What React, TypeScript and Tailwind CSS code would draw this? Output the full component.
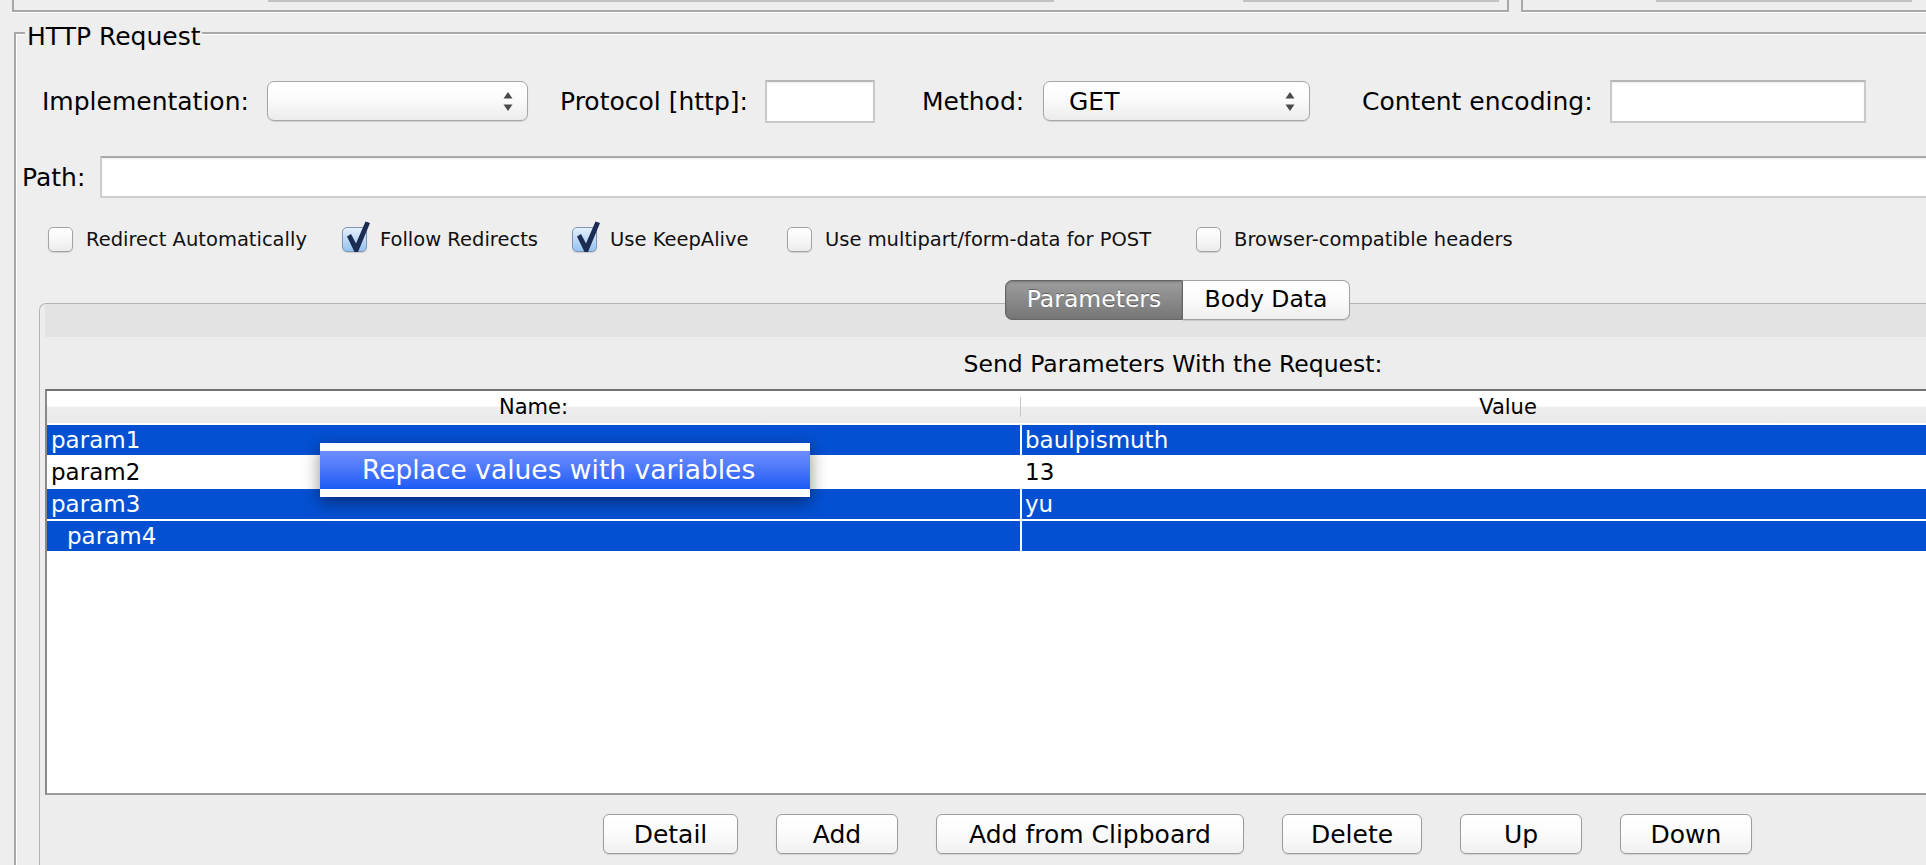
import type { ReactNode } from 'react';

// JMeter "HTTP Request" sampler panel, Mac Aqua look

const ROWS = [
  { name: 'param1', value: 'baulpismuth', selected: true, editing: false },
  { name: 'param2', value: '13', selected: false, editing: false },
  { name: 'param3', value: 'yu', selected: true, editing: false },
  { name: 'param4', value: '', selected: true, editing: true },
];

const BUTTONS = [
  { label: 'Detail', width: 'w-[135px]' },
  { label: 'Add', width: 'w-[122px]' },
  { label: 'Add from Clipboard', width: 'w-[308px]' },
  { label: 'Delete', width: 'w-[140px]' },
  { label: 'Up', width: 'w-[122px]' },
  { label: 'Down', width: 'w-[132px]' },
];

function UpDownArrows() {
  return (
    <svg width="10" height="19" viewBox="0 0 10 19" className="shrink-0">
      <path d="M5 0 L9.5 6.5 L0.5 6.5 Z" fill="#4a4a4a" />
      <path d="M0.5 12.5 L9.5 12.5 L5 19 Z" fill="#4a4a4a" />
    </svg>
  );
}

function Combo({ width, value }: { width: string; value?: string }) {
  return (
    <div
      className={`${width} h-[40px] flex items-center rounded-[7px] border border-[#a6a6a6] bg-[linear-gradient(to_bottom,#ffffff_0%,#fbfbfb_45%,#ececec_100%)] shadow-[0_1px_1px_rgba(0,0,0,0.12)]`}
    >
      <span className="flex-1 pl-[25px] text-[25px] leading-none">{value}</span>
      <span className="pr-[14px] flex items-center">
        <UpDownArrows />
      </span>
    </div>
  );
}

function TextField({ width }: { width: string }) {
  return (
    <div
      className={`${width} h-[43px] bg-white border-2 border-[#c9c9c9] border-t-[#b7b7b7] shadow-[inset_0_1px_2px_rgba(0,0,0,0.08)]`}
    />
  );
}

function Label({ width, children }: { width: string; children: ReactNode }) {
  return <span className={`${width} shrink-0 whitespace-nowrap text-[25px] leading-none`}>{children}</span>;
}

function CheckBox({ checked }: { checked: boolean }) {
  return (
    <div className="relative w-[25px] h-[25px] shrink-0">
      <div
        className={
          checked
            ? 'w-full h-full rounded-[5px] border border-[#7e95b5] bg-[linear-gradient(to_bottom,#e4f0fd_0%,#b9d6f6_55%,#94c2f0_100%)] shadow-[0_1px_1px_rgba(0,0,0,0.15)]'
            : 'w-full h-full rounded-[5px] border border-[#a3a3a3] bg-[linear-gradient(to_bottom,#ffffff_0%,#f7f7f7_50%,#ebebeb_100%)] shadow-[0_1px_1px_rgba(0,0,0,0.12)]'
        }
      />
      {checked && (
        <svg width="30" height="32" viewBox="0 0 30 32" className="absolute left-0 -top-[6px]">
          <path d="M5 15.5 L9 13 L14 22.5 L23.5 0.5 L28 2 L16 31 L12.5 31 Z" fill="#1b2b52" />
        </svg>
      )}
    </div>
  );
}

function Option({ checked, label, width }: { checked: boolean; label: string; width: string }) {
  return (
    <div className={`${width} shrink-0 flex items-center`}>
      <CheckBox checked={checked} />
      <span className="ml-[13px] whitespace-nowrap text-[19.5px] leading-none text-[#111]">{label}</span>
    </div>
  );
}

function App() {
  return (
    <div className="relative w-[1926px] h-[865px] overflow-hidden bg-[#eeeeee] font-['DejaVu_Sans',sans-serif] text-black">
      {/* panels above, cut off by the window edge */}
      <div className="flex h-[14px]">
        <div className="ml-[12px] w-[1497px] h-[12px] shrink-0 flex border-l-2 border-r-2 border-b-2 border-[#a8a8a8] shadow-[0_1px_0_#ffffff]">
          <div className="ml-[254px] w-[786px] h-[2px] bg-[#c2c2c2]" />
          <div className="ml-[189px] w-[256px] h-[2px] bg-[#c2c2c2]" />
        </div>
        <div className="ml-[12px] flex-1 h-[12px] flex border-l-2 border-b-2 border-[#a8a8a8] shadow-[0_1px_0_#ffffff]">
          <div className="ml-[133px] w-[256px] h-[2px] bg-[#c2c2c2]" />
        </div>
      </div>

      {/* HTTP Request titled border */}
      <div className="mt-[18px] ml-[14px] w-[2400px] h-[900px] border-l-2 border-t-2 border-[#a8a8a8] shadow-[inset_1px_1px_0_#ffffff]">
        <div className="-mt-[12px] ml-[9px] w-fit px-[2px] bg-[#eeeeee] text-[25px] leading-[30px] whitespace-nowrap">
          HTTP Request
        </div>

        {/* implementation / protocol / method / encoding */}
        <div className="mt-[27px] h-[44px] flex items-center">
          <span className="ml-[26px]" />
          <Label width="w-[206px]">Implementation:</Label>
          <div className="ml-[19px]">
            <Combo width="w-[261px]" />
          </div>
          <span className="ml-[32px]" />
          <Label width="w-[188px]">Protocol [http]:</Label>
          <div className="ml-[17px]">
            <TextField width="w-[110px]" />
          </div>
          <span className="ml-[47px]" />
          <Label width="w-[101px]">Method:</Label>
          <div className="ml-[20px]">
            <Combo width="w-[267px]" value="GET" />
          </div>
          <span className="ml-[52px]" />
          <Label width="w-[231px]">Content encoding:</Label>
          <div className="ml-[17px]">
            <TextField width="w-[256px]" />
          </div>
        </div>

        {/* path */}
        <div className="mt-[33px] h-[42px] flex items-center">
          <span className="ml-[6px]" />
          <Label width="w-[62px]">Path:</Label>
          <div className="ml-[16px] flex-1 h-[42px] bg-white border-2 border-[#cdcdcd] border-t-[#a9a9a9] shadow-[inset_0_1px_2px_rgba(0,0,0,0.08)]" />
        </div>

        {/* options */}
        <div className="mt-[29px] h-[25px] flex items-center pl-[32px]">
          <Option checked={false} label="Redirect Automatically" width="w-[294px]" />
          <Option checked label="Follow Redirects" width="w-[230px]" />
          <Option checked label="Use KeepAlive" width="w-[215px]" />
          <Option checked={false} label="Use multipart/form-data for POST" width="w-[409px]" />
          <Option checked={false} label="Browser-compatible headers" width="w-[400px]" />
        </div>

        {/* tabbed pane */}
        <div className="mt-[28px] ml-[23px] w-[2276px]">
          <div className="relative z-10 ml-[966px] h-[40px] flex">
            <div className="w-[178px] h-[40px] flex items-center justify-center rounded-l-[7px] border border-[#666666] bg-[linear-gradient(to_bottom,#9d9d9d_0%,#8a8a8a_50%,#767676_100%)] text-white text-[23.5px] leading-none shadow-[inset_0_1px_2px_rgba(0,0,0,0.25)] [text-shadow:0_-1px_0_rgba(0,0,0,0.35)]">
              Parameters
            </div>
            <div className="w-[167px] h-[40px] flex items-center justify-center rounded-r-[7px] border border-l-0 border-[#a2a2a2] bg-[linear-gradient(to_bottom,#ffffff_0%,#fbfbfb_50%,#eeeeee_100%)] text-[23.5px] leading-none shadow-[0_1px_1px_rgba(0,0,0,0.12)]">
              Body Data
            </div>
          </div>

          <div className="-mt-[17px] h-[600px] rounded-tl-[7px] border-t border-l border-[#b4b4b4] bg-[#ededed] pl-[5px]">
            <div className="h-[33px] bg-[#e3e3e3]" />

            <div className="mt-[13px] ml-[917px] w-[422px] text-center whitespace-nowrap text-[23.5px] leading-[28px]">
              Send Parameters With the Request:
            </div>

            {/* parameter table */}
            <div className="mt-[11px] h-[406px] bg-white border-t-2 border-l-2 border-b-2 border-t-[#707070] border-l-[#8a8a8a] border-b-[#9b9b9b]">
              <div className="h-[32px] flex bg-[linear-gradient(to_bottom,#ffffff_0%,#ffffff_46%,#eeeeee_52%,#e9e9e9_100%)]">
                <div className="w-[973px] flex items-center justify-center text-[21px] leading-none">Name:</div>
                <div className="w-[1px] my-[6px] bg-[#c6c6c6]" />
                <div className="w-[974px] flex items-center justify-center text-[21px] leading-none">Value</div>
              </div>
              <div className="h-[2px]" />
              {ROWS.map((row) => (
                <div key={row.name} className="h-[32px]">
                  <div
                    className={`h-[30px] flex text-[23px] leading-none ${
                      row.selected ? 'bg-[#0450d2] text-white' : 'bg-white text-black'
                    }`}
                  >
                    <div className={`w-[972px] ml-[1px] flex items-center ${row.editing ? 'pl-[19px]' : 'pl-[3px]'}`}>
                      {row.name}
                    </div>
                    <div className="w-[2px] bg-white" />
                    <div className="flex-1 flex items-center pl-[3px]">{row.value}</div>
                  </div>
                  <div className="h-[2px] bg-white" />
                </div>
              ))}
            </div>

            <div className="mt-[19px] ml-[558px] flex gap-[38px]">
              {BUTTONS.map((b) => (
                <div
                  key={b.label}
                  className={`${b.width} h-[40px] flex items-center justify-center rounded-[6px] border border-[#9c9c9c] bg-[linear-gradient(to_bottom,#ffffff_0%,#fbfbfb_50%,#f0f0f0_100%)] shadow-[0_1px_1px_rgba(0,0,0,0.12)] text-[25px] leading-none whitespace-nowrap`}
                >
                  {b.label}
                </div>
              ))}
            </div>
          </div>
        </div>
      </div>

      {/* context menu over the table */}
      <div className="absolute left-[320px] top-[443px] z-20 w-[490px] h-[54px] bg-white pt-[8px] shadow-[0_5px_16px_rgba(0,0,0,0.45)]">
        <div className="h-[38px] flex items-center pl-[42px] bg-[linear-gradient(to_bottom,#6b8efc_0%,#4d78fa_45%,#2a63f6_85%,#1a5bf4_100%)] text-white text-[26.5px] leading-none whitespace-nowrap">
          Replace values with variables
        </div>
      </div>
    </div>
  );
}

export default App;
